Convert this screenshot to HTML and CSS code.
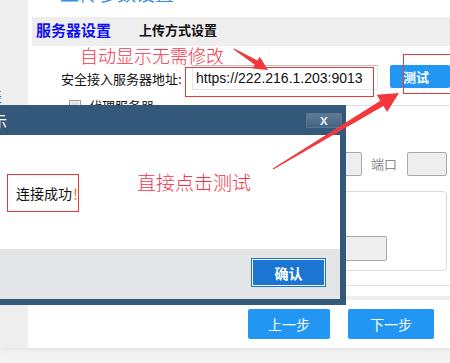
FILE: index.html
```html
<!DOCTYPE html>
<html lang="zh-CN">
<head>
<meta charset="utf-8">
<title>上传参数设置</title>
<link rel="stylesheet" href="styles.css">
</head>
<body>
<div class="stage">
  <div class="page">
    <aside class="sidebar"><span class="side-item">表</span></aside>
    <main class="main">
      <div class="title">上传参数设置</div>
      <div class="tabs">
        <span class="tab tab-active">服务器设置</span>
        <span class="tab">上传方式设置</span>
      </div>
      <div class="form">
        <div class="addr-row">
          <label class="addr-label">安全接入服务器地址:</label>
          <div class="addr-input">https://222.216.1.203:9013</div>
          <button class="btn btn-test">测试</button>
        </div>
        <div class="proxy">
          <div class="legend"><span class="checkbox"></span><span class="legend-text">代理服务器</span></div>
          <div class="port-row">
            <div class="field field-host"></div>
            <span class="port-label">端口</span>
            <div class="field field-port"></div>
          </div>
          <div class="panel"><div class="field field-wide"></div></div>
        </div>
      </div>
      <div class="strip"></div>
      <div class="actions">
        <button class="btn btn-step btn-prev">上一步</button>
        <button class="btn btn-step btn-next">下一步</button>
      </div>
    </main>
  </div>

  <div class="dialog">
    <div class="dialog-head">
      <span class="dialog-title">提示</span>
      <span class="dialog-close">x</span>
    </div>
    <div class="dialog-body">
      <span class="msg">连接成功<span class="bang">！</span></span>
    </div>
    <div class="dialog-foot">
      <button class="btn-ok">确认</button>
    </div>
  </div>

  <div class="note note-auto">自动显示无需修改</div>
  <div class="note note-click">直接点击测试</div>
  <div class="mark mark-addr"></div>
  <div class="mark mark-test"></div>

  <svg class="arrows" width="450" height="363" viewBox="0 0 450 363">
    <polygon points="233.7,49.4 254.8,64.8 252.4,68.6 268,70 259.8,56.7 257.4,60.5 234.3,48.6"/>
    <polygon points="273.3,169.4 383.4,105.9 387.1,111.9 399,93 376.7,94.7 380.3,100.7 272.7,168.6"/>
  </svg>
</div>
</body>
</html>
```

FILE: styles.css
```css
* { box-sizing: border-box; }

html, body {
  margin: 0;
  padding: 0;
  background: #f2f2f2;
}

body {
  font-family: "Noto Sans CJK SC", "Noto Sans", sans-serif;
  color: #111;
}

.stage {
  position: relative;
  width: 450px;
  height: 363px;
  overflow: hidden;
  background: linear-gradient(#e9e9e9, #f3f3f3 6px);
}

.page {
  display: flex;
  height: 348px;
  box-shadow: 0 2px 5px rgba(0, 0, 0, 0.07);
}

.sidebar {
  width: 28px;
  height: 348px;
  background: #eeeeee;
  padding-top: 86px;
  overflow: hidden;
}

.side-item {
  display: block;
  margin-left: -12px;
  font-size: 14px;
  line-height: 20px;
  color: #2f7fd8;
}

.main {
  width: 422px;
  height: 348px;
  background: #ffffff;
  overflow: hidden;
}

.title {
  margin-top: -17px;
  height: 20px;
  padding-left: 32px;
  font-size: 19px;
  line-height: 20px;
  color: #3d8ee6;
}

.tabs {
  margin: 14px 0 0 4px;
  height: 29px;
  background: #eeeeee;
  display: flex;
  align-items: center;
  padding: 0 0 3px 4px;
}

.tab {
  font-size: 13px;
  font-weight: bold;
  color: #111;
  line-height: 18px;
}

.tab-active {
  width: 75px;
  margin-right: 28px;
  font-size: 15px;
  color: #1010f0;
}

.form {
  padding-left: 33px;
}

.addr-row {
  margin-top: 19px;
  height: 25px;
  display: flex;
  align-items: flex-start;
}

.addr-label {
  width: 120px;
  margin-right: 11px;
  font-size: 13px;
  line-height: 27px;
  white-space: nowrap;
}

.addr-input {
  width: 206px;
  height: 25px;
  border: 1px solid #e6e6e6;
  border-top-color: #bdbdbd;
  padding-left: 3px;
  font-family: "Liberation Sans", sans-serif;
  font-size: 14px;
  line-height: 24px;
  color: #111;
  white-space: nowrap;
}

.btn {
  border: none;
  padding: 0;
  font-family: "Noto Sans CJK SC", sans-serif;
  color: #ffffff;
  background: #2196f3;
  border-radius: 2px;
}

.btn-test {
  margin-left: 12px;
  width: 60px;
  height: 23px;
  flex: none;
  text-align: left;
  padding-left: 13px;
  font-size: 13px;
  font-weight: bold;
  line-height: 23px;
}

.proxy {
  margin: 15px 0 0 -6px;
  width: 415px;
  border: 1px solid #dde2e8;
  padding-bottom: 14px;
}

.legend {
  margin: -7px 0 0 11px;
  height: 13px;
  display: flex;
  align-items: center;
  gap: 8px;
  width: fit-content;
  padding: 0 2px;
  background: #ffffff;
}

.checkbox {
  width: 12px;
  height: 12px;
  border: 1px solid #9a9a9a;
  background: #e2e2e2;
  box-shadow: inset 0 0 0 1px #f4f4f4;
}

.legend-text {
  font-size: 13px;
  line-height: 13px;
}

.port-row {
  margin-top: 40px;
  display: flex;
  justify-content: flex-end;
  align-items: center;
  padding-right: 22px;
  height: 24px;
}

.field {
  height: 24px;
  background: #eeeeee;
  border: 1px solid #a9a9a9;
  border-radius: 2px;
}

.field-host { width: 100px; }

.port-label {
  margin: 0 10px 0 9px;
  font-size: 13px;
  color: #8a8a8a;
  line-height: 24px;
}

.field-port { width: 40px; }

.panel {
  margin: 15px 22px 0 60px;
  height: 80px;
  border: 1px solid #d6dde5;
  border-radius: 4px;
  padding-top: 44px;
}

.field-wide {
  width: 270px;
  height: 25px;
}

.strip {
  margin-top: 10px;
  height: 4px;
  background: #eeeeee;
}

.actions {
  margin-top: 9px;
  display: flex;
  gap: 18px;
  padding-left: 220px;
}

.btn-step {
  height: 30px;
  font-size: 14px;
  line-height: 30px;
}

.btn-prev { width: 82px; }
.btn-next { width: 86px; }

/* dialog overlay */
.dialog {
  position: absolute;
  left: -120px;
  top: 105px;
  width: 466px;
  background: #34587a;
  padding: 0 6px 6px 0;
}

.dialog-head {
  height: 30px;
  margin-right: -6px;
  display: flex;
  align-items: center;
  justify-content: space-between;
  padding-right: 4px;
}

.dialog-title {
  padding-left: 97px;
  font-size: 15px;
  color: #ffffff;
}

.dialog-close {
  width: 36px;
  height: 15px;
  background: linear-gradient(#5f7a96, #436383);
  border: 1px solid #5a7491;
  border-radius: 1px;
  color: #e6eaee;
  font-family: "Liberation Sans", sans-serif;
  font-weight: bold;
  font-size: 14px;
  line-height: 12px;
  text-align: center;
}

.dialog-body {
  height: 114px;
  background: #ffffff;
  padding: 39px 0 0 127px;
}

.msg {
  display: block;
  width: 72px;
  height: 38px;
  border: 1px solid #e53a3a;
  padding-left: 8px;
  font-size: 14px;
  line-height: 36px;
  color: #111;
  white-space: nowrap;
}

.bang { color: #d9822b; }

.dialog-foot {
  height: 50px;
  background: #e4e5e7;
  display: flex;
  justify-content: flex-end;
  align-items: flex-start;
  padding: 9px 14px 0 0;
}

.btn-ok {
  width: 75px;
  height: 29px;
  border: 1px solid #1673d0;
  box-shadow: inset 0 0 0 1px #ffffff;
  background: #1a76d2;
  color: #ffffff;
  font-family: "Noto Sans CJK SC", sans-serif;
  font-size: 14px;
  font-weight: bold;
  padding: 0;
}

/* annotations */
.note {
  position: absolute;
  font-weight: 300;
  color: #f3344c;
  white-space: nowrap;
}

.note-auto {
  left: 80px;
  top: 46px;
  font-size: 18px;
  line-height: 18px;
}

.note-click {
  left: 137px;
  top: 172px;
  font-size: 19px;
  line-height: 19px;
}

.mark {
  position: absolute;
  border: 1px solid #e53a3a;
}

.mark-addr {
  left: 185px;
  top: 67px;
  width: 189px;
  height: 30px;
}

.mark-test {
  left: 403px;
  top: 54px;
  width: 60px;
  height: 40px;
}

.arrows {
  position: absolute;
  left: 0;
  top: 0;
  fill: #f1383d;
}
```
